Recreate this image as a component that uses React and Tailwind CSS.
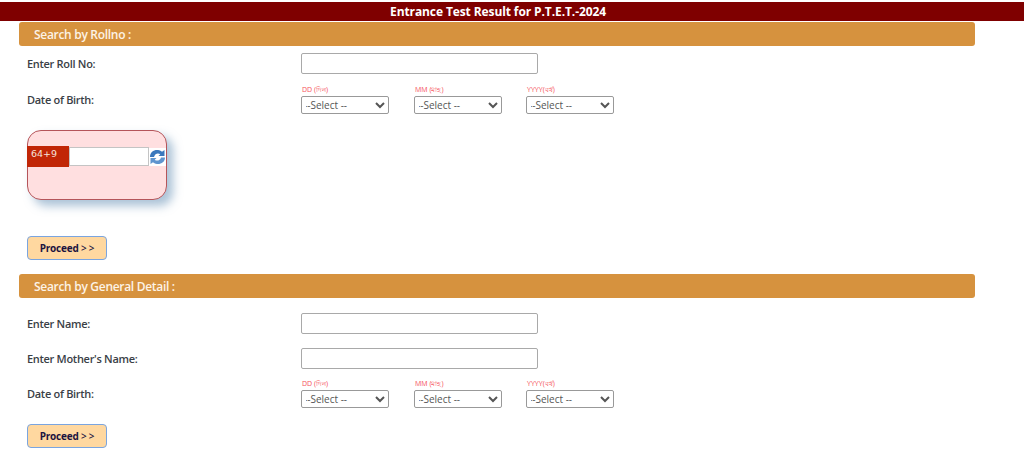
const font = { fontFamily: '"Open Sans", "Noto Sans", sans-serif' }

function SectionBar({ title }) {
  return (
    <div className="ml-[19px] w-[956px] h-[24px] bg-[#d6923e] rounded-[3px] pl-[15px] pt-[2px] flex items-center text-[12px] tracking-[-0.3px] font-semibold text-[#fdf3e6]">
      {title}
    </div>
  )
}

function TextRow({ label, className }) {
  return (
    <div className={'flex items-center ' + className}>
      <label className="w-[274px] pt-[2px] text-[11px] tracking-[-0.3px] font-semibold text-[#3a4046]">{label}</label>
      <input type="text" className="w-[237px] h-[21px] bg-white border border-[#a9a9a9] rounded-[2px]" />
    </div>
  )
}

function DateSelect({ label, className }) {
  return (
    <div className={'flex flex-col ' + className}>
      <span className="h-[13px] leading-[13px] pl-px text-[7px] text-[#f5505a] whitespace-nowrap">{label}</span>
      <select className="w-[88px] h-[18px] bg-white border border-[#999] rounded-[2px] text-[10px] text-[#555] -indent-[2px]">
        <option>--Select --</option>
      </select>
    </div>
  )
}

function DobRow({ className }) {
  return (
    <div className={'flex items-center ' + className}>
      <label className="w-[274px] pt-[4px] text-[11px] tracking-[-0.3px] font-semibold text-[#3a4046]">Date of Birth:</label>
      <div className="flex">
        <DateSelect label="DD (দিন)" className="w-[113px]" />
        <DateSelect label="MM (মাহ)" className="w-[112px]" />
        <DateSelect label="YYYY(বর্ষ)" className="w-[112px]" />
      </div>
    </div>
  )
}

function ProceedButton({ className }) {
  return (
    <button className={'block w-[80px] h-[24px] bg-[#ffd8a0] border border-[#7aa5e0] rounded-[4px] text-[10px] tracking-[-0.2px] font-bold text-[#1c1440] ' + className}>
      Proceed <span className="font-semibold">&gt; &gt;</span>
    </button>
  )
}

function RefreshIcon() {
  return (
    <svg width="17" height="18" viewBox="0 0 17 18" className="bg-white shrink-0">
      <path d="M1 9 C1 4 5 1.5 9 2 C11 2.2 12.3 3 13 3.8 L15.5 2 L15.5 8 L9.5 8 L11.3 6.3 C9.5 4.8 6 5 5 9 Z" fill="#3a78bd" />
      <path d="M16 9.5 C16 14 12 16.5 8 16 C6 15.8 4.7 15 4 14.2 L1.5 16 L1.5 10 L7.5 10 L5.7 11.7 C7.5 13.2 11 13 12 9.5 Z" fill="#5f95cf" />
    </svg>
  )
}

function Captcha() {
  return (
    <div className="mt-[16px] ml-[27px] w-[140px] h-[70px] bg-[#ffdfe0] border border-[#b5555a] rounded-[14px] shadow-[6px_6px_10px_rgba(90,135,175,0.5)] pt-[15px]">
      <div className="flex items-center -ml-px">
        <div className="w-[43px] h-[21px] bg-[#c12606] text-[#f6e4dc] text-[9.5px] pl-[4px] leading-[16px]" style={{ fontFamily: '"DejaVu Sans", sans-serif' }}>64+9</div>
        <input type="text" className="w-[80px] h-[19px] bg-white border border-[#c4c4c4]" />
        <RefreshIcon />
      </div>
    </div>
  )
}

export default function App() {
  return (
    <div className="w-[1024px] h-[475px] overflow-hidden bg-white" style={font}>
      <div className="pt-[2px]">
        <div className="h-[19px] bg-[#7f0000] pr-[28px] flex items-center justify-center text-[12px] tracking-[-0.1px] font-bold text-white">
          Entrance Test Result for P.T.E.T.-2024
        </div>
      </div>
      <div className="h-px" />
      <SectionBar title="Search by Rollno :" />
      <div className="pl-[27px]">
        <TextRow label="Enter Roll No:" className="mt-[7px]" />
        <DobRow className="mt-[9px]" />
      </div>
      <Captcha />
      <ProceedButton className="mt-[36px] ml-[27px]" />
      <div className="h-[14px]" />
      <SectionBar title="Search by General Detail :" />
      <div className="pl-[27px]">
        <TextRow label="Enter Name:" className="mt-[15px]" />
        <TextRow label="Enter Mother's Name:" className="mt-[14px]" />
        <DobRow className="mt-[8px]" />
      </div>
      <ProceedButton className="mt-[16px] ml-[27px]" />
    </div>
  )
}
